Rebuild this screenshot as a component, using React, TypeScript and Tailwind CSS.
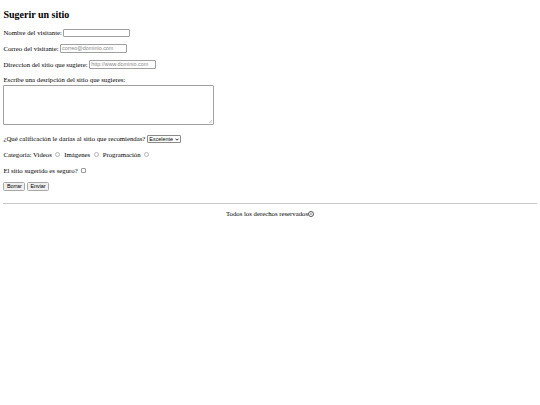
import React from 'react'

const serif = "font-['Liberation_Serif','Times_New_Roman',serif]"
const sans = "font-['Liberation_Sans',Arial,sans-serif]"

function TextBox({ width, placeholder }: { width: string; placeholder?: string }) {
  return (
    <span
      className={`inline-flex items-center h-[8.5px] ${width} border border-[#a0a0a0] rounded-[1px] bg-white px-[1px] align-middle ${sans} text-[5.4px] text-[#8a8a8a] leading-none`}
    >
      {placeholder}
    </span>
  )
}

function Radio() {
  return <span className="inline-block w-[5px] h-[5px] rounded-full border border-[#b4b4b4] bg-white align-middle ml-[3.5px] mr-[4px]" />
}

function Btn({ label }: { label: string }) {
  return (
    <span
      className={`inline-flex items-center h-[9px] px-[2.5px] border border-[#a8a8a8] rounded-[1.5px] bg-[#efefef] ${sans} text-[5.4px] text-black leading-none`}
    >
      {label}
    </span>
  )
}

export default function App() {
  return (
    <div className={`min-h-[405px] w-[540px] bg-white text-black px-[3.4px] pt-[9.4px] ${serif} text-[6.75px] leading-[1.15]`}>
      <h2 className="text-[10px] font-bold leading-[1.15] mb-[7.6px]">Sugerir un sitio</h2>

      <div className="flex flex-col gap-[6.75px]">
        <p className="flex items-center h-[9px] gap-[1.5px]">
          Nombre del visitante: <TextBox width="w-[67px]" />
        </p>
        <p className="flex items-center h-[9px] gap-[1.5px]">
          Correo del visitante: <TextBox width="w-[67px]" placeholder="correo@dominio.com" />
        </p>
        <p className="flex items-center h-[9px] gap-[1.5px]">
          Direccion del sitio que sugiere: <TextBox width="w-[67px]" placeholder="http://www.dominio.com" />
        </p>
        <div>
          <p className="mb-[1.5px]">Escribe una desripción del sitio que sugieres:</p>
          <div className="relative w-[211px] h-[40px] border border-[#a0a0a0] rounded-[1px] bg-white">
            <svg className="absolute right-[1px] bottom-[1px]" width="4" height="4" viewBox="0 0 4 4">
              <path d="M1 4 L4 1 M2.5 4 L4 2.5" stroke="#9a9a9a" strokeWidth="0.5" />
            </svg>
          </div>
        </div>
        <p className="flex items-center h-[9px] gap-[1.5px] mt-[3px]">
          ¿Qué calificación le darías al sitio que recomiendas?
          <span
            className={`inline-flex items-center justify-between w-[34px] h-[8px] border border-[#8a8a8a] rounded-[1px] bg-white pl-[1.5px] pr-[1px] ${sans} text-[5.4px] leading-none`}
          >
            Excelente
            <svg width="4" height="3" viewBox="0 0 4 3">
              <path d="M0.5 0.7 L2 2.2 L3.5 0.7" fill="none" stroke="#000" strokeWidth="0.8" />
            </svg>
          </span>
        </p>
        <p className="flex items-center h-[9px]">
          Categoría: Videos <Radio /> Imágenes <Radio /> Programación <Radio />
        </p>
        <p className="flex items-center h-[9px]">
          El sitio sugerido es seguro?
          <span className="inline-block w-[5px] h-[5px] rounded-[1px] border border-[#9a9a9a] bg-white ml-[3px]" />
        </p>
        <div className="flex items-center gap-[1.5px] h-[9px]">
          <Btn label="Borrar" />
          <Btn label="Enviar" />
        </div>
      </div>

      <hr className="mt-[12.5px] mb-[5.5px] border-0 border-t border-[#c8c8c8]" />
      <p className="flex items-center justify-center">
        Todos los derechos reservados
        <span className="inline-flex items-center justify-center w-[6px] h-[6px] rounded-full border border-[#555] text-[4px] leading-none">c</span>
      </p>
    </div>
  )
}
